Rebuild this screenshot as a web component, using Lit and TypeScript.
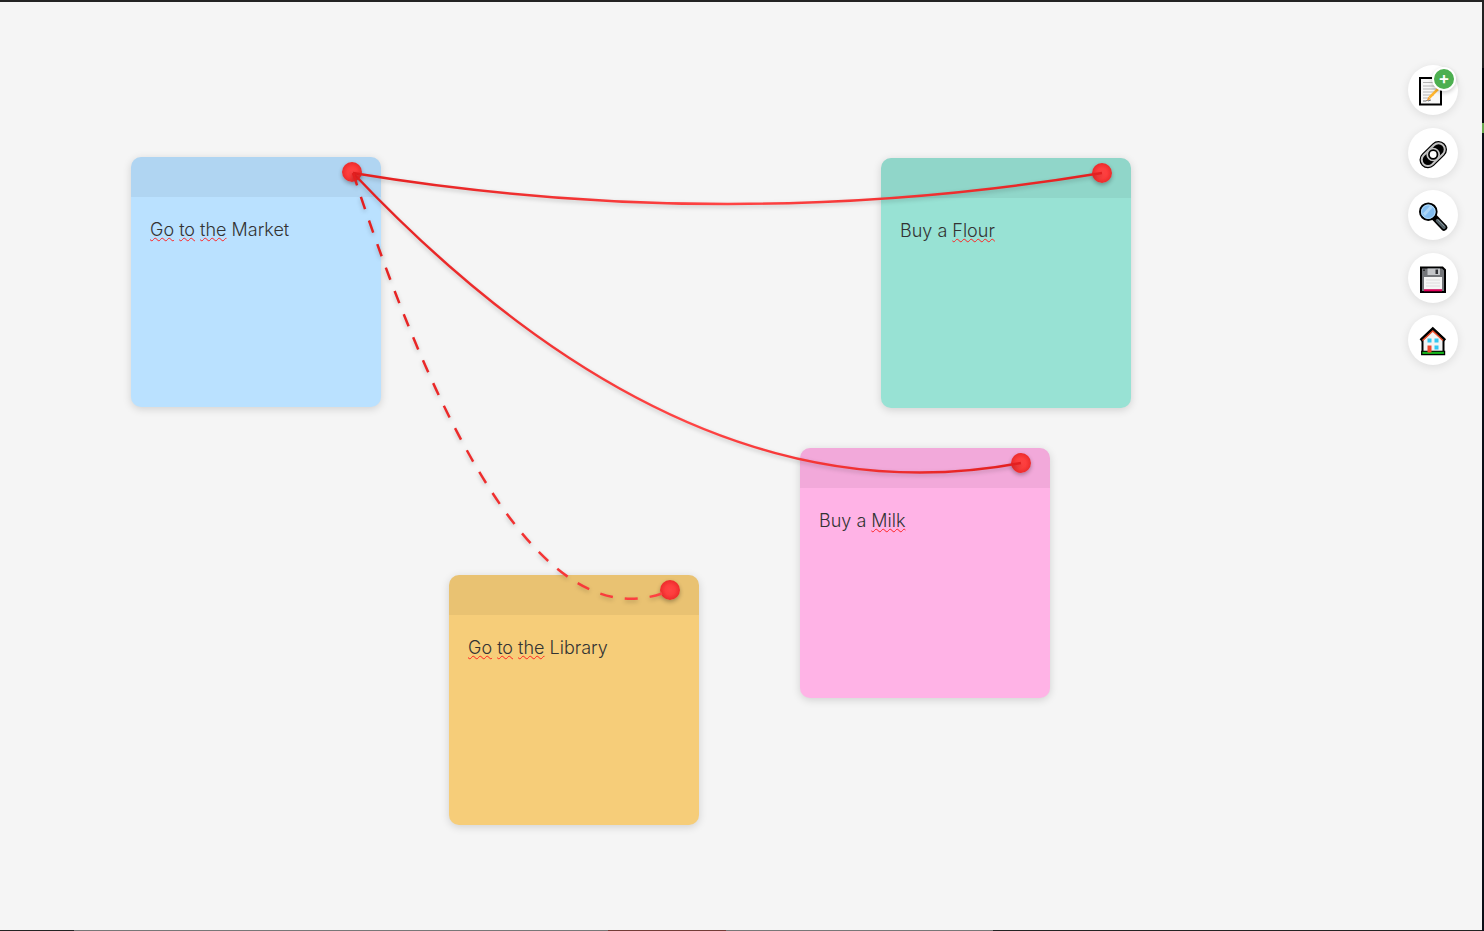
import { LitElement, html, css, svg } from "lit";
import { customElement, property } from "lit/decorators.js";

interface Note {
  id: string;
  x: number;
  y: number;
  tone: string;
  words: { text: string; flagged?: boolean }[];
}

interface Link {
  d: string;
  dashed?: boolean;
}

const NOTES: Note[] = [
  {
    id: "market", x: 131, y: 155, tone: "blue",
    words: [
      { text: "Go", flagged: true }, { text: "to", flagged: true },
      { text: "the", flagged: true }, { text: "Market" },
    ],
  },
  {
    id: "flour", x: 881, y: 156, tone: "mint",
    words: [{ text: "Buy" }, { text: "a" }, { text: "Flour", flagged: true }],
  },
  {
    id: "milk", x: 800, y: 446, tone: "pink",
    words: [{ text: "Buy" }, { text: "a" }, { text: "Milk", flagged: true }],
  },
  {
    id: "library", x: 449, y: 573, tone: "amber",
    words: [
      { text: "Go", flagged: true }, { text: "to", flagged: true },
      { text: "the", flagged: true }, { text: "Library" },
    ],
  },
];

const LINKS: Link[] = [
  { d: "M353 171 Q728 233 1102 171" },
  { d: "M353 171 Q687 524 1021 461" },
  { d: "M353 171 Q512 658 671 588", dashed: true },
];

@customElement("sticky-note")
export class StickyNote extends LitElement {
  @property({ attribute: false }) note!: Note;

  static styles = css`
    :host { display: block; }
    .card {
      width: 250px;
      height: 250px;
      border-radius: 10px;
      box-shadow: 0 2px 8px rgba(0, 0, 0, 0.15);
      overflow: hidden;
      display: flex;
      flex-direction: column;
    }
    .blue { background: #bae1ff; }
    .mint { background: #98e2d4; }
    .pink { background: #ffb3e6; }
    .amber { background: #f6cd79; }
    .head {
      height: 40px;
      flex: none;
      background: rgba(0, 0, 0, 0.05);
      display: flex;
      justify-content: flex-end;
      align-items: flex-start;
      padding: 5px 19px 0;
      box-sizing: border-box;
    }
    .pin {
      width: 20px;
      height: 20px;
      padding: 0;
      border: 0;
      border-radius: 50%;
      background: radial-gradient(circle, #ff4444 0%, #fd3d3d 35%, #de1c1c 100%);
      box-shadow: 0 2px 4px rgba(0, 0, 0, 0.3);
      cursor: pointer;
    }
    .text {
      flex: 1;
      padding: 19px;
      font: 300 18px/27px Inter, sans-serif;
      color: #333;
      outline: none;
    }
    .flagged {
      text-decoration: underline wavy #f22 1px;
      text-decoration-skip-ink: none;
      text-underline-offset: 1px;
    }
  `;

  render() {
    const { words, tone } = this.note;
    return html`
      <article class="card ${tone}">
        <div class="head"><button class="pin" aria-label="Connect note"></button></div>
        <div class="text" role="textbox" aria-label="Note text" contenteditable="true"
          >${words.map((w, i) => html`${i ? " " : ""}${w.flagged
            ? html`<span class="flagged">${w.text}</span>` : w.text}`)}</div>
      </article>`;
  }
}

const memoIcon = svg`
  <path d="M3 4H24V30.500H3Z" fill="#f8f8f8" stroke="#000" stroke-width="2"/>
  <path d="M6 8.500H17M6 12H18M6 15H21M6 18H19M6 21H17M6 24H13" stroke="#b5b5b5" stroke-width="1.200"/>
  <path d="M6 27H9Q11 25 11 27L14 26" stroke="#777" fill="none"/>
  <path d="M12.500 23.500L21.500 14.500" stroke="#ffb52e" stroke-width="2.500"/>
  <path d="M10 26.500L11.300 22.700L13.900 25.200Z" fill="#f3a23a"/>`;

const linkIcon = svg`
  <g fill="none" stroke-linecap="round">
    <path d="M11 22.800L21.500 12.500" stroke="#000" stroke-width="17"/>
    <path d="M11 22.800L21.500 12.500" stroke="#c4c4c4" stroke-width="14.500"/>
    <path d="M11 22.800L21.500 12.500" stroke="#000" stroke-width="10.500"/>
    <circle cx="16.200" cy="17.500" r="6" fill="#000" stroke="#c4c4c4" stroke-width="1.700"/>
    <circle cx="16.200" cy="17.500" r="3.400" fill="#fff"/>
  </g>`;

const searchIcon = svg`
  <path d="M18 19L27 28.500" stroke="#000" stroke-width="6.500" stroke-linecap="round"/>
  <path d="M16 17L20 21" stroke="#000" stroke-width="3"/>
  <path d="M20.500 21.500L27 28.200" stroke="#546268" stroke-width="3.500" stroke-linecap="round"/>
  <path d="M20.500 20.500L27.500 27.500" stroke="#87949a" stroke-width="1"/>
  <circle cx="11.300" cy="12.700" r="8.300" fill="#83bdf0" stroke="#000" stroke-width="2"/>
  <circle cx="11.300" cy="12.700" r="6.800" fill="none" stroke="#b4dbf7" stroke-width="1"/>
  <path d="M6 14.500L13 7L16 8L8 17Z" fill="#add6f7"/>`;

const saveIcon = svg`
  <path d="M4 5.500H25.500L28 8V30H4Z" fill="#737579" stroke="#000" stroke-width="2"/>
  <path d="M10.500 6.500H23V13H10.500Z" fill="#c3c5c8"/>
  <path d="M18.500 7.500H21V12H18.500Z" fill="#303236"/>
  <path d="M6 7.500H8V9H6Z" fill="#333"/>
  <path d="M7 15H25V27.500H7Z" fill="#f5f5f5"/>
  <path d="M9 18H23M9 21H23M9 24H23" stroke="#ddd"/>
  <path d="M7 27.300H25V29.300H7Z" fill="#e6005c"/>`;

const homeIcon = svg`
  <path d="M5.500 14.500L15.800 5L26.500 14.500V30H5.500Z" fill="#f3f3f3" stroke="#000" stroke-width="2"/>
  <path d="M4.800 27.500H27.500V30.500H4.800Z" fill="#10a616" stroke="#000" stroke-width="1.400"/>
  <path d="M5.500 28.800H26.800" stroke="#16b51c" stroke-width="2"/>
  <path d="M3.700 16.500L15.800 5L28 16.500" fill="none" stroke="#000" stroke-width="3.200"/>
  <path d="M5.500 16.500L15.800 7L26 16.500" fill="none" stroke="#f0512e" stroke-width="1.500"/>
  <path d="M10.500 14.500H14.500V18.500H10.500ZM17.500 14.500H21.500V18.500H17.500ZM17.500 21.500H21.500V25.500H17.500Z" fill="#33c7f2"/>
  <path d="M10.500 21.500H14.500V28.500H10.500Z" fill="#f0462d"/>`;

@customElement("app-root")
export class AppRoot extends LitElement {
  static styles = css`
    :host {
      display: block;
      font-family: Inter, sans-serif;
    }
    .window {
      min-height: 100vh;
      box-sizing: border-box;
      display: flex;
      flex-direction: column;
      border-top: 2px solid #232323;
      padding-right: 2px;
      background:
        linear-gradient(#232323 66px, #05070d 66px 121px, #6aa84f 121px 131px, #0b0e16 131px) right / 2px 100% no-repeat,
        #f5f5f5;
    }
    .board {
      position: relative;
      flex: 1;
      display: flex;
      justify-content: flex-end;
      align-items: flex-start;
      overflow: hidden;
    }
    .edge {
      height: 1px;
      background: linear-gradient(90deg, #232323 5%, #777 5% 41%, #733c36 41% 49%, #777 49% 67%, #232323 67%);
    }
    .note { position: absolute; }
    .wires {
      position: absolute;
      inset: 0;
      width: 100%;
      height: 100%;
      pointer-events: none;
    }
    .wire {
      fill: none;
      stroke-width: 2.5px;
      filter: drop-shadow(0 2px 2px rgba(0, 0, 0, 0.2));
    }
    .dashed { stroke-dasharray: 13 12; }
    .tools {
      height: 300px;
      margin: 63px 24px 0 0;
      display: flex;
      flex-direction: column;
      justify-content: space-between;
    }
    .tool {
      position: relative;
      width: 50px;
      height: 50px;
      padding: 0;
      border: 0;
      border-radius: 50%;
      background: #fff;
      box-shadow: 0 2px 10px rgba(0, 0, 0, 0.1);
      display: flex;
      align-items: center;
      justify-content: center;
      cursor: pointer;
    }
    .icon { width: 32px; height: 32px; display: block; }
    .badge {
      position: absolute;
      top: 2px;
      right: 2px;
      width: 20px;
      height: 20px;
      border: 2px solid #fff;
      border-radius: 50%;
      background: #4caf50;
      box-shadow: 0 2px 4px rgba(0, 0, 0, 0.2);
      color: #fff;
      font: 600 17px/19px Inter, sans-serif;
      text-align: center;
    }
  `;

  private tool(label: string, icon: unknown, badge = "") {
    return html`<button class="tool" aria-label=${label}>
      <svg class="icon" viewBox="0 0 32 32" aria-hidden="true">${icon}</svg>
      ${badge ? html`<span class="badge">${badge}</span>` : ""}
    </button>`;
  }

  render() {
    return html`
      <main class="window">
        <div class="board">
          ${NOTES.map((n) => html`<sticky-note class="note" .note=${n}
            style="left:${n.x}px;top:${n.y}px"></sticky-note>`)}
          <svg class="wires" aria-hidden="true">
            <defs>
              <linearGradient id="red">
                <stop offset="0" stop-color="#e31f1f"/>
                <stop offset="0.500" stop-color="#ff4444"/>
                <stop offset="1" stop-color="#e31f1f"/>
              </linearGradient>
              <linearGradient id="red-open">
                <stop offset="0" stop-color="#e31f1f"/>
                <stop offset="1" stop-color="#ff4444"/>
              </linearGradient>
            </defs>
            ${LINKS.map((l) => svg`<path class="wire ${l.dashed ? "dashed" : ""}" d=${l.d}
              stroke="url(#${l.dashed ? "red-open" : "red"})"/>`)}
          </svg>
          <nav class="tools" aria-label="Board tools">
            ${this.tool("Add note", memoIcon, "+")}
            ${this.tool("Link notes", linkIcon)}
            ${this.tool("Search", searchIcon)}
            ${this.tool("Save", saveIcon)}
            ${this.tool("Home", homeIcon)}
          </nav>
        </div>
        <div class="edge"></div>
      </main>`;
  }
}
